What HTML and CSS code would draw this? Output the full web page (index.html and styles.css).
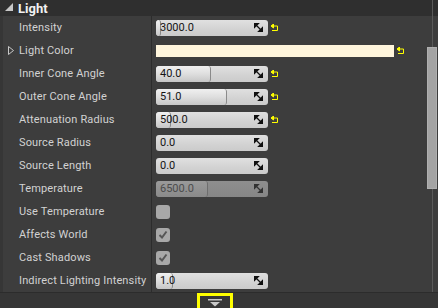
FILE: index.html
```html
<!DOCTYPE html>
<html lang="en">
<head>
    <meta charset="UTF-8">
    <title>Light Details</title>
    <link rel="stylesheet" href="styles.css">
</head>
<body>
    <div class="panel">
        <!-- Category header -->
        <div class="header">
            <svg class="caret" width="8" height="8" viewBox="0 0 8 8"><polygon points="0,8 8,8 8,0" fill="#c8c8c8"/></svg>
            <span>Light</span>
        </div>

        <div class="rows">
            <div class="row">
                <div class="label">Intensity</div>
                <div class="value">
                    <div class="field"><div class="fill" style="width: 4px"></div><span class="num">3000.0</span><svg class="drag" width="9" height="9" viewBox="0 0 9 9"><polygon points="0,0 5,0 0,5"/><polygon points="9,9 4,9 9,4"/><line x1="1" y1="1" x2="8" y2="8"/></svg></div>
                    <svg class="reset" width="8" height="8" viewBox="0 0 8 8"><polygon points="0,2 2.5,0 2.5,4"/><polyline points="2,2 6.5,2 6.5,6.5 1,6.5"/></svg>
                </div>
            </div>
            <div class="row">
                <div class="label"><svg class="expand" width="6" height="9" viewBox="0 0 6 9"><polygon points="0.5,0.5 5.5,4.5 0.5,8.5"/></svg>Light Color</div>
                <div class="value">
                    <div class="color"></div>
                    <svg class="reset" width="8" height="8" viewBox="0 0 8 8"><polygon points="0,2 2.5,0 2.5,4"/><polyline points="2,2 6.5,2 6.5,6.5 1,6.5"/></svg>
                </div>
            </div>
            <div class="row">
                <div class="label">Inner Cone Angle</div>
                <div class="value">
                    <div class="field"><div class="fill" style="width: 54px"></div><span class="num">40.0</span><svg class="drag" width="9" height="9" viewBox="0 0 9 9"><polygon points="0,0 5,0 0,5"/><polygon points="9,9 4,9 9,4"/><line x1="1" y1="1" x2="8" y2="8"/></svg></div>
                    <svg class="reset" width="8" height="8" viewBox="0 0 8 8"><polygon points="0,2 2.5,0 2.5,4"/><polyline points="2,2 6.5,2 6.5,6.5 1,6.5"/></svg>
                </div>
            </div>
            <div class="row">
                <div class="label">Outer Cone Angle</div>
                <div class="value">
                    <div class="field"><div class="fill" style="width: 70px"></div><span class="num">51.0</span><svg class="drag" width="9" height="9" viewBox="0 0 9 9"><polygon points="0,0 5,0 0,5"/><polygon points="9,9 4,9 9,4"/><line x1="1" y1="1" x2="8" y2="8"/></svg></div>
                    <svg class="reset" width="8" height="8" viewBox="0 0 8 8"><polygon points="0,2 2.5,0 2.5,4"/><polyline points="2,2 6.5,2 6.5,6.5 1,6.5"/></svg>
                </div>
            </div>
            <div class="row">
                <div class="label">Attenuation Radius</div>
                <div class="value">
                    <div class="field"><div class="fill" style="width: 14px"></div><span class="num">500.0</span><svg class="drag" width="9" height="9" viewBox="0 0 9 9"><polygon points="0,0 5,0 0,5"/><polygon points="9,9 4,9 9,4"/><line x1="1" y1="1" x2="8" y2="8"/></svg></div>
                    <svg class="reset" width="8" height="8" viewBox="0 0 8 8"><polygon points="0,2 2.5,0 2.5,4"/><polyline points="2,2 6.5,2 6.5,6.5 1,6.5"/></svg>
                </div>
            </div>
            <div class="row">
                <div class="label">Source Radius</div>
                <div class="value">
                    <div class="field"><span class="num">0.0</span><svg class="drag" width="9" height="9" viewBox="0 0 9 9"><polygon points="0,0 5,0 0,5"/><polygon points="9,9 4,9 9,4"/><line x1="1" y1="1" x2="8" y2="8"/></svg></div>
                </div>
            </div>
            <div class="row">
                <div class="label">Source Length</div>
                <div class="value">
                    <div class="field"><span class="num">0.0</span><svg class="drag" width="9" height="9" viewBox="0 0 9 9"><polygon points="0,0 5,0 0,5"/><polygon points="9,9 4,9 9,4"/><line x1="1" y1="1" x2="8" y2="8"/></svg></div>
                </div>
            </div>
            <div class="row">
                <div class="label">Temperature</div>
                <div class="value">
                    <div class="field disabled"><div class="fill" style="width: 51px"></div><span class="num">6500.0</span><svg class="drag" width="9" height="9" viewBox="0 0 9 9"><polygon points="0,0 5,0 0,5"/><polygon points="9,9 4,9 9,4"/><line x1="1" y1="1" x2="8" y2="8"/></svg></div>
                </div>
            </div>
            <div class="row">
                <div class="label">Use Temperature</div>
                <div class="value"><div class="check"></div></div>
            </div>
            <div class="row">
                <div class="label">Affects World</div>
                <div class="value"><div class="check"><svg width="10" height="9" viewBox="0 0 10 9"><polyline points="1.5,5 4,7.5 8.5,1.5"/></svg></div></div>
            </div>
            <div class="row">
                <div class="label">Cast Shadows</div>
                <div class="value"><div class="check"><svg width="10" height="9" viewBox="0 0 10 9"><polyline points="1.5,5 4,7.5 8.5,1.5"/></svg></div></div>
            </div>
            <div class="row">
                <div class="label">Indirect Lighting Intensity</div>
                <div class="value">
                    <div class="field"><div class="fill" style="width: 16px"></div><span class="num">1.0</span><svg class="drag" width="9" height="9" viewBox="0 0 9 9"><polygon points="0,0 5,0 0,5"/><polygon points="9,9 4,9 9,4"/><line x1="1" y1="1" x2="8" y2="8"/></svg></div>
                </div>
            </div>
        </div>

        <div class="scrollbar"><div class="thumb"></div></div>

        <div class="footer">
            <div class="collapse-btn">
                <svg width="16" height="8" viewBox="0 0 16 8"><rect x="1" y="0" width="14" height="1.5" fill="#c8c8c8"/><polygon points="3,3 13,3 8,7.5" fill="#c8c8c8"/></svg>
            </div>
        </div>
    </div>
</body>
</html>
```

FILE: styles.css
```css
/* General Styles */
html, body {
    margin: 0;
    height: 100%;
    background-color: #3d3d3d;
    font-family: 'Roboto', 'Liberation Sans', sans-serif;
}

.panel {
    width: 438px;
    height: 308px;
    display: grid;
    grid-template-columns: 1fr 12px;
    grid-template-rows: 16px 1fr 16px;
    overflow: hidden;
}

/* Header */
.header {
    grid-column: 1 / 3;
    grid-row: 1;
    display: flex;
    align-items: center;
    gap: 5px;
    padding-left: 5px;
    background-color: #2f2f2f;
    color: #f2f2f2;
    font-size: 13px;
    font-weight: bold;
}

.caret {
    margin-bottom: 2px;
}

/* Property rows */
.rows {
    grid-column: 1;
    grid-row: 2;
    border-left: 3px solid #363636;
    display: flex;
    flex-direction: column;
}

.row {
    height: 23px;
    display: flex;
    align-items: center;
}

.label {
    width: 149px;
    height: 100%;
    box-sizing: border-box;
    padding-left: 16px;
    display: flex;
    align-items: center;
    position: relative;
    border-right: 1px solid #2c2c2c;
    color: #d2d2d2;
    font-size: 11px;
    letter-spacing: 0.15px;
}

.expand {
    position: absolute;
    left: 5px;
    fill: none;
    stroke: #c8c8c8;
}

.value {
    flex: 1;
    display: flex;
    align-items: center;
    padding-left: 4px;
    gap: 3px;
}

/* Numeric spin field */
.field {
    width: 112px;
    height: 16px;
    box-sizing: border-box;
    border-radius: 3px;
    background: linear-gradient(#e0e0e0, #d2d2d2 60%, #cbcbcb);
    display: flex;
    align-items: center;
    position: relative;
    overflow: hidden;
}

.fill {
    position: absolute;
    left: 0;
    top: 0;
    bottom: 0;
    border-radius: 3px;
    border-right: 1px solid #8a8a8a;
    background: linear-gradient(#f0f0f0, #dedede 50%, #c6c6c6);
}

.num {
    position: relative;
    padding-left: 4px;
    flex: 1;
    color: #141414;
    font-size: 11px;
}

.drag {
    position: relative;
    margin-right: 5px;
    fill: #111;
    stroke: #111;
    stroke-width: 1.2;
}

.field.disabled {
    background: linear-gradient(#8e8e8e, #868686);
}

.field.disabled .fill {
    background: linear-gradient(#9a9a9a, #8a8a8a);
    border-right-color: #6e6e6e;
}

.field.disabled .num {
    color: #4c4c4c;
}

.field.disabled .drag {
    fill: #333;
    stroke: #333;
}

.reset {
    fill: #ffff00;
    stroke: #ffff00;
    stroke-width: 1;
}

.reset polyline {
    fill: none;
}

/* Color swatch */
.color {
    width: 238px;
    height: 12px;
    background-color: #fff5dc;
}

/* Checkbox */
.check {
    width: 14px;
    height: 14px;
    border-radius: 3px;
    background-color: #a8a8a8;
    display: flex;
    align-items: center;
    justify-content: center;
}

.check svg {
    fill: none;
    stroke: #565656;
    stroke-width: 2;
}

/* Scrollbar */
.scrollbar {
    grid-column: 2;
    grid-row: 1 / 3;
    display: flex;
    justify-content: center;
    background: linear-gradient(#5a5a5a, #5a5a5a) center / 1px 100% no-repeat;
}

.thumb {
    width: 10px;
    height: 142px;
    margin-top: 47px;
    margin-right: 1px;
    box-sizing: border-box;
    background-color: #a4a4a4;
    border: 1px solid #b0b0b0;
}

/* Footer */
.footer {
    grid-column: 1 / 3;
    grid-row: 3;
    background-color: #363636;
    border-top: 1px solid #2c2c2c;
    display: flex;
    align-items: flex-end;
}

.collapse-btn {
    margin-left: 197px;
    width: 36px;
    height: 15px;
    box-sizing: border-box;
    border: 3px solid #ffff00;
    border-bottom: none;
    display: flex;
    justify-content: center;
    align-items: center;
    padding-top: 1px;
}
```
